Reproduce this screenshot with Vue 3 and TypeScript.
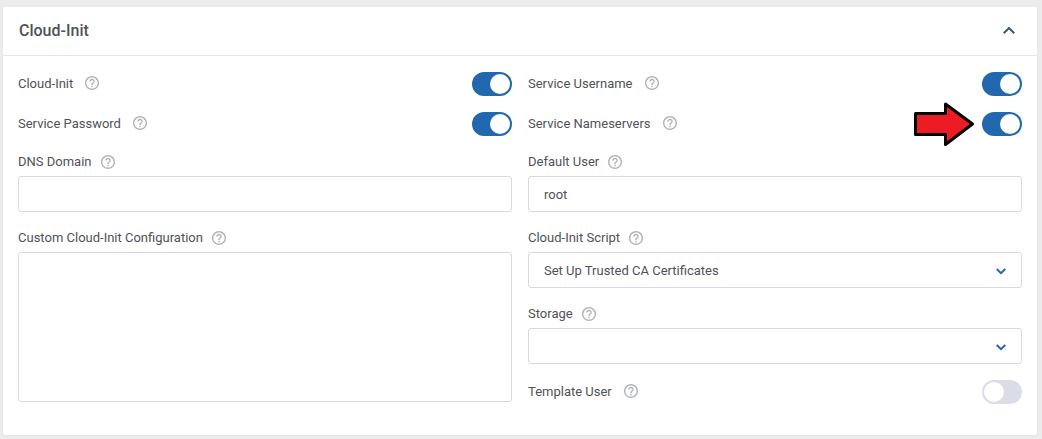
<script setup lang="ts">
import { defineComponent, h, ref } from 'vue'

const HelpIcon = defineComponent({
  props: { topic: { type: String, required: true } },
  setup(props) {
    return () =>
      h('svg', { class: 'help', viewBox: '2 2 20 20', role: 'img', 'aria-label': `Help: ${props.topic}` }, [
        h('path', {
          d: 'M11 18h2v-2h-2v2zm1-16C6.48 2 2 6.48 2 12s4.48 10 10 10 10-4.48 10-10S17.52 2 12 2zm0 18c-4.41 0-8-3.59-8-8s3.59-8 8-8 8 3.59 8 8-3.59 8-8 8zm0-14c-2.21 0-4 1.79-4 4h2c0-1.1.9-2 2-2s2 .9 2 2c0 2-3 1.75-3 5h2c0-2.25 3-2.5 3-5 0-2.21-1.79-4-4-4z',
        }),
      ])
  },
})

const open = ref(true)
const cloudInit = ref(true)
const servicePassword = ref(true)
const serviceUsername = ref(true)
const serviceNameservers = ref(true)
const templateUser = ref(false)
const dnsDomain = ref('')
const defaultUser = ref('root')
const configuration = ref('')
const script = ref('Set Up Trusted CA Certificates')
const storage = ref('')
</script>

<template>
  <main class="page">
    <section class="card">
      <header class="card-header">
        <h2>Cloud-Init</h2>
        <button type="button" class="collapse" aria-label="Toggle section" :aria-expanded="open" @click="open = !open">
          <svg viewBox="0 0 12 8"><path d="M.8 6.2L6 1l5.2 5.2" /></svg>
        </button>
      </header>
      <div v-show="open" class="card-body">
        <div class="column">
          <div class="switch-row">
            <label for="cloud-init">Cloud-Init</label>
            <HelpIcon topic="Cloud-Init" />
            <input id="cloud-init" v-model="cloudInit" type="checkbox" role="switch" class="switch" />
          </div>
          <div class="switch-row">
            <label for="service-password">Service Password</label>
            <HelpIcon topic="Service Password" />
            <input id="service-password" v-model="servicePassword" type="checkbox" role="switch" class="switch" />
          </div>
          <div class="field">
            <div class="field-label">
              <label for="dns-domain">DNS Domain</label>
              <HelpIcon topic="DNS Domain" />
            </div>
            <input id="dns-domain" v-model="dnsDomain" type="text" class="control" />
          </div>
          <div class="field">
            <div class="field-label">
              <label for="configuration">Custom Cloud-Init Configuration</label>
              <HelpIcon topic="Custom Cloud-Init Configuration" />
            </div>
            <textarea id="configuration" v-model="configuration" class="control area"></textarea>
          </div>
        </div>

        <div class="column">
          <div class="switch-row">
            <label for="service-username">Service Username</label>
            <HelpIcon topic="Service Username" />
            <input id="service-username" v-model="serviceUsername" type="checkbox" role="switch" class="switch" />
          </div>
          <div class="switch-row">
            <label for="service-nameservers">Service Nameservers</label>
            <HelpIcon topic="Service Nameservers" />
            <span class="switch-holder">
              <input
                id="service-nameservers"
                v-model="serviceNameservers"
                type="checkbox"
                role="switch"
                class="switch"
              />
              <svg class="pointer" viewBox="0 0 62 46" aria-hidden="true">
                <path d="M1.5 11.5H31.5V2L58.5 22 31.5 42.5V32.5H1.5z" />
              </svg>
            </span>
          </div>
          <div class="field">
            <div class="field-label">
              <label for="default-user">Default User</label>
              <HelpIcon topic="Default User" />
            </div>
            <input id="default-user" v-model="defaultUser" type="text" class="control" />
          </div>
          <div class="field">
            <div class="field-label">
              <label for="script">Cloud-Init Script</label>
              <HelpIcon topic="Cloud-Init Script" />
            </div>
            <div class="select">
              <select id="script" v-model="script" class="control">
                <option>Set Up Trusted CA Certificates</option>
              </select>
              <svg class="chevron" viewBox="0 0 10 7"><path d="M.7 1L5 5.2 9.3 1" /></svg>
            </div>
          </div>
          <div class="field">
            <div class="field-label">
              <label for="storage">Storage</label>
              <HelpIcon topic="Storage" />
            </div>
            <div class="select">
              <select id="storage" v-model="storage" class="control">
                <option value=""></option>
              </select>
              <svg class="chevron" viewBox="0 0 10 7"><path d="M.7 1L5 5.2 9.3 1" /></svg>
            </div>
          </div>
          <div class="switch-row">
            <label for="template-user">Template User</label>
            <HelpIcon topic="Template User" />
            <input id="template-user" v-model="templateUser" type="checkbox" role="switch" class="switch" />
          </div>
        </div>
      </div>
    </section>
  </main>
</template>

<style>
body {
  background: #ececec;
}
</style>

<style scoped>
.page {
  padding: 7px 5px 4px 3px;
  color: #4f5257;
  font: 13px/20px Roboto, "Liberation Sans", sans-serif;
}
.card {
  background: #fff;
  border-radius: 3px;
  box-shadow: 0 1px 3px #e4e4ea;
}
.card-header {
  display: flex;
  align-items: center;
  justify-content: space-between;
  height: 48px;
  padding: 0 16px;
  border-bottom: 1px solid #e6e6ea;
}
h2 {
  margin: 0;
  font-size: 16px;
  font-weight: 500;
}
.collapse {
  display: flex;
  align-items: center;
  justify-content: center;
  width: 24px;
  height: 24px;
  padding: 0;
  border: 0;
  background: none;
  cursor: pointer;
}
.collapse svg {
  width: 12px;
  height: 8px;
  fill: none;
  stroke: #3f5670;
  stroke-width: 2;
}
.card-body {
  display: grid;
  grid-template-columns: 1fr 1fr;
  gap: 16px;
  padding: 16px 15px 31px;
}
.column {
  display: flex;
  flex-direction: column;
  gap: 16px;
  min-width: 0;
}
.switch-row {
  display: flex;
  align-items: center;
  height: 24px;
  gap: 12px;
}
.field {
  display: flex;
  flex-direction: column;
  gap: 4px;
}
.field-label {
  display: flex;
  align-items: center;
  gap: 9px;
}
:deep(.help) {
  flex: none;
  width: 14px;
  height: 14px;
  fill: #b0b3ba;
}
.switch-row :deep(.help) {
  margin-bottom: 2px;
}
.switch {
  appearance: none;
  display: block;
  box-sizing: border-box;
  width: 40px;
  height: 24px;
  margin: 0 0 0 auto;
  padding: 2px;
  border-radius: 12px;
  background: #dadce6;
  cursor: pointer;
}
.switch::before {
  content: "";
  display: block;
  width: 20px;
  height: 20px;
  border-radius: 50%;
  background: #fff;
}
.switch:checked {
  background: #2268af;
}
.switch:checked::before {
  margin-left: auto;
}
.switch-holder {
  position: relative;
  margin-left: auto;
}
.pointer {
  position: absolute;
  top: -10px;
  right: 46px;
  width: 62px;
  height: 46px;
  fill: #ed1c24;
  stroke: #000;
  stroke-width: 3;
  stroke-linejoin: round;
  pointer-events: none;
}
.control {
  display: block;
  box-sizing: border-box;
  width: 100%;
  height: 36px;
  margin: 0;
  padding: 0 15px;
  border: 1px solid #d8d9e5;
  border-radius: 3px;
  background: #fff;
  color: inherit;
  font: inherit;
  outline: 0;
}
.area {
  height: 150px;
  padding: 8px 15px;
  resize: none;
}
.select {
  position: relative;
}
select.control {
  appearance: none;
  padding: 2px 36px 0 15px;
}
.chevron {
  position: absolute;
  top: 16px;
  right: 16px;
  width: 10px;
  height: 7px;
  fill: none;
  stroke: #2268af;
  stroke-width: 2;
  pointer-events: none;
}
</style>
